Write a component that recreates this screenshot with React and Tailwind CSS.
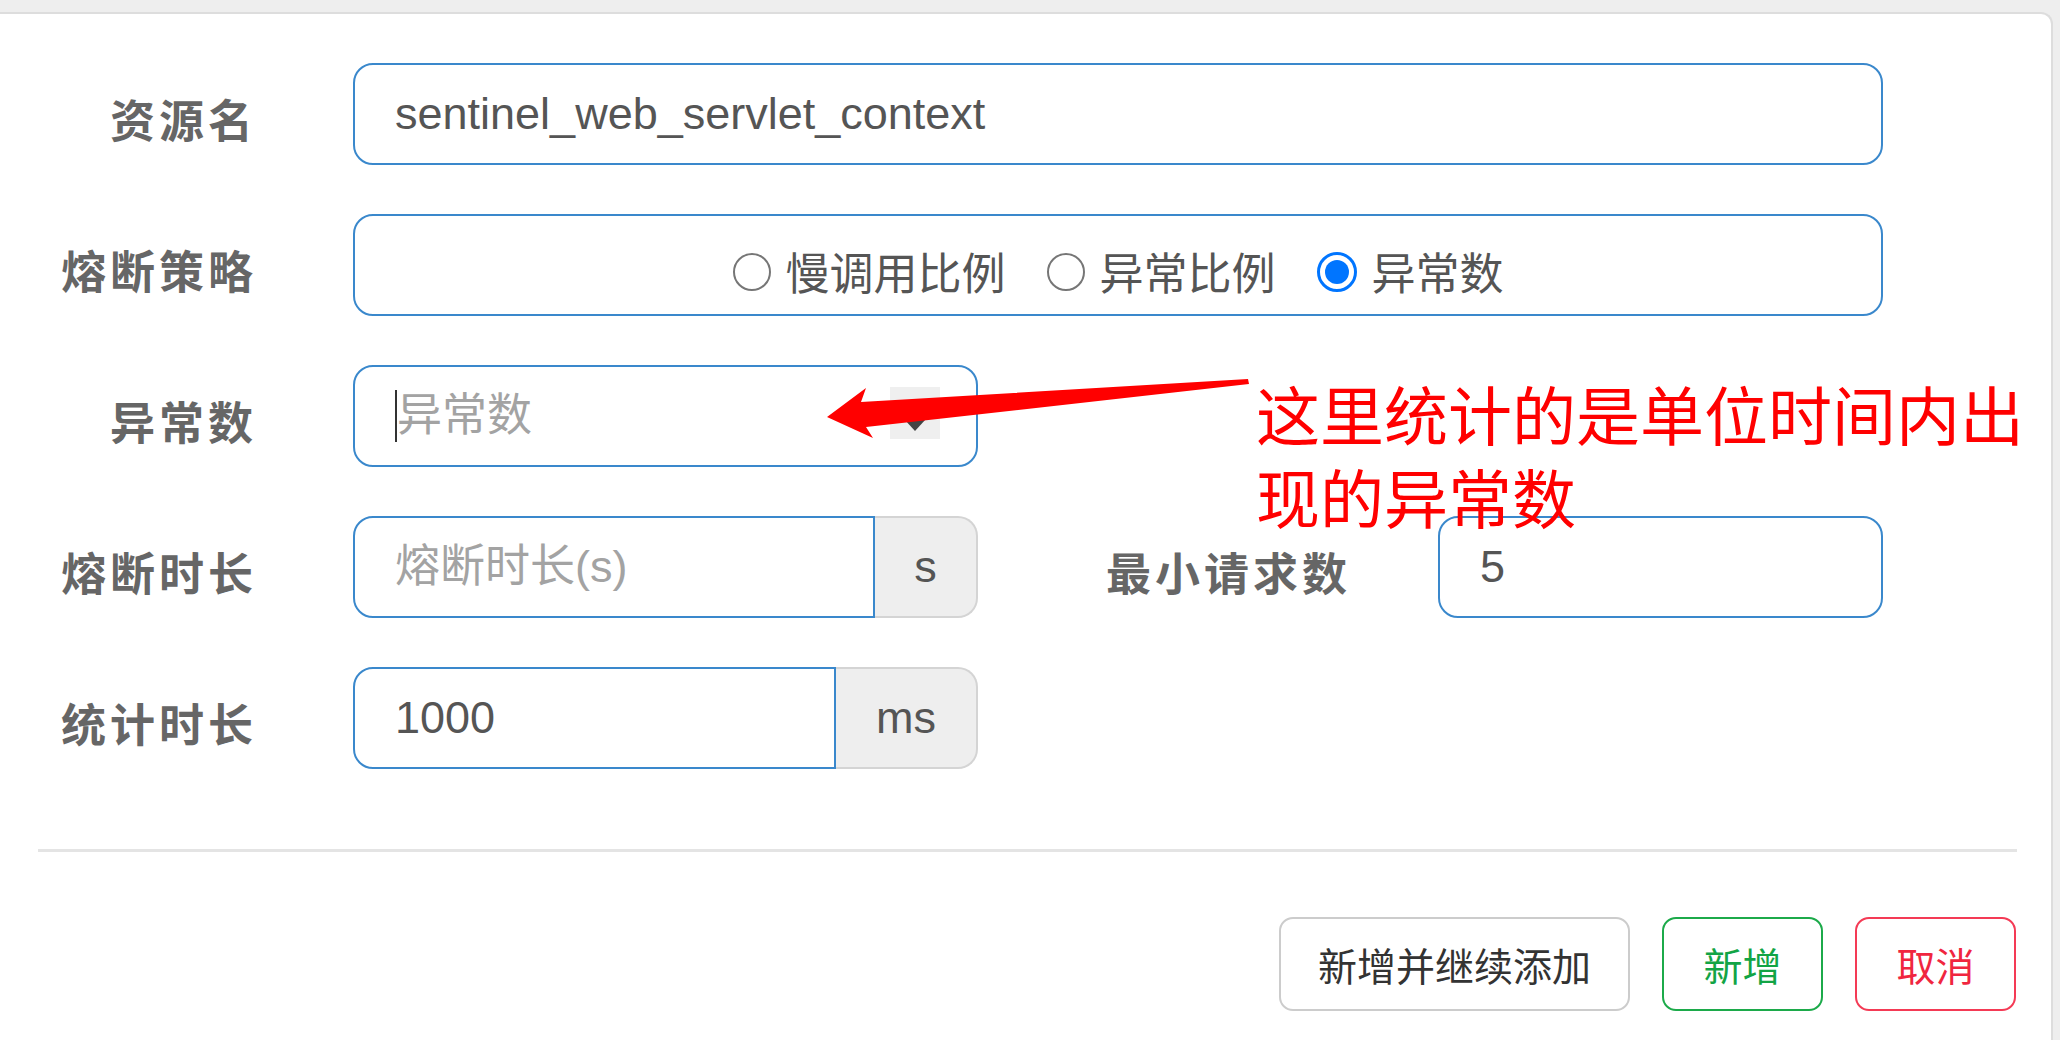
export default function App() {
  const label =
    "shrink-0 text-right font-['Noto_Sans_CJK_SC',sans-serif] font-bold text-[45px] tracking-[4px] text-[#666666] pt-[10px]";
  const field =
    "h-full border-[2px] border-[#3a88cc] flex items-center pl-[40px] text-[45px]";
  const addon =
    "h-full bg-[#eeeeee] border-y-[2px] border-r-[2px] border-[#d4d4d4] rounded-r-[20px] flex items-center justify-center text-[45px] text-[#555555]";

  const Radio = ({ checked, text }) => (
    <div className="flex items-center gap-[15px]">
      {checked ? (
        <span className="w-[40px] h-[40px] rounded-full border-[3px] border-[#0075ff] bg-white flex items-center justify-center">
          <span className="w-[24px] h-[24px] rounded-full bg-[#0075ff]" />
        </span>
      ) : (
        <span className="w-[38px] h-[38px] rounded-full border-[2px] border-[#767676] bg-white" />
      )}
      <span className="text-[44px] text-[#555555] leading-none pt-[6px]">{text}</span>
    </div>
  );

  return (
    <div className="relative w-[2060px] h-[1040px] overflow-hidden bg-[#eeeeee] font-['Liberation_Sans','Noto_Sans_CJK_SC',sans-serif]">
      <div className="mt-[12px] w-[2053px] h-[1028px] bg-white border-t-[2px] border-r-[2px] border-[#dddddd] rounded-tr-[12px] pt-[49px]">
        <div className="flex flex-col gap-[49px]">
          {/* Row 1 */}
          <div className="flex items-center h-[102px]">
            <div className={`${label} w-[257px]`}>资源名</div>
            <div className={`${field} ml-[96px] w-[1530px] rounded-[20px] text-[#555555]`}>
              sentinel_web_servlet_context
            </div>
          </div>
          {/* Row 2 */}
          <div className="flex items-center h-[102px]">
            <div className={`${label} w-[257px]`}>熔断策略</div>
            <div className="ml-[96px] w-[1530px] h-full border-[2px] border-[#3a88cc] rounded-[20px] flex items-center justify-center gap-[41px] pt-[14px]">
              <Radio text="慢调用比例" />
              <Radio text="异常比例" />
              <Radio checked text="异常数" />
            </div>
          </div>
          {/* Row 3 */}
          <div className="flex items-center h-[102px]">
            <div className={`${label} w-[257px]`}>异常数</div>
            <div className={`${field} relative ml-[96px] w-[625px] rounded-[20px] text-[#a3a3a3]`}>
              <span className="absolute left-[40px] top-[23px] w-[2px] h-[52px] bg-[#333333]" />
              <span className="pl-[2px]">异常数</span>
              <div className="absolute left-[535px] top-[20px] w-[50px] h-[52px] bg-[#efefef] flex items-end justify-center pb-[8px]">
                <svg width="22" height="12" viewBox="0 0 22 12">
                  <polygon points="0,0 22,0 11,12" fill="#444444" />
                </svg>
              </div>
            </div>
          </div>
          {/* Row 4 */}
          <div className="flex items-center h-[102px]">
            <div className={`${label} w-[257px]`}>熔断时长</div>
            <div className="ml-[96px] flex h-full">
              <div className={`${field} w-[522px] rounded-l-[20px] text-[#a3a3a3]`}>熔断时长(s)</div>
              <div className={`${addon} w-[103px]`}>s</div>
            </div>
            <div className={`${label} w-[373px]`}>最小请求数</div>
            <div className={`${field} ml-[87px] w-[445px] rounded-[20px] text-[#555555]`}>5</div>
          </div>
          {/* Row 5 */}
          <div className="flex items-center h-[102px]">
            <div className={`${label} w-[257px]`}>统计时长</div>
            <div className="ml-[96px] flex h-full">
              <div className={`${field} w-[483px] rounded-l-[20px] text-[#555555]`}>1000</div>
              <div className={`${addon} w-[142px]`}>ms</div>
            </div>
          </div>
        </div>

        <div className="mt-[80px] ml-[38px] w-[1979px] h-[3px] bg-[#e4e4e4]" />

        <div className="mt-[65px] pr-[35px] flex justify-end gap-[32px] font-['Noto_Sans_CJK_SC',sans-serif] text-[39px]">
          <button className="w-[351px] h-[94px] border-[2px] border-[#cccccc] rounded-[14px] bg-white text-[#333333] flex items-center justify-center">
            新增并继续添加
          </button>
          <button className="w-[161px] h-[94px] border-[2px] border-[#1caa4a] rounded-[14px] bg-white text-[#12a445] flex items-center justify-center">
            新增
          </button>
          <button className="w-[161px] h-[94px] border-[2px] border-[#f43a55] rounded-[14px] bg-white text-[#f0263f] flex items-center justify-center">
            取消
          </button>
        </div>
      </div>

      {/* Annotation arrow */}
      <svg className="absolute left-0 top-0 pointer-events-none" width="2060" height="1040" viewBox="0 0 2060 1040">
        <polygon
          points="827,417 866,388 861,402 1248,379 1249,384 866,427 873,438"
          fill="#ff0000"
        />
      </svg>

      {/* Annotation text */}
      <div className="absolute left-[1256px] top-[371px] font-['Noto_Sans_CJK_SC',sans-serif] text-[64px] leading-[83px] text-[#ff0000] whitespace-nowrap">
        <div>这里统计的是单位时间内出</div>
        <div>现的异常数</div>
      </div>
    </div>
  );
}
